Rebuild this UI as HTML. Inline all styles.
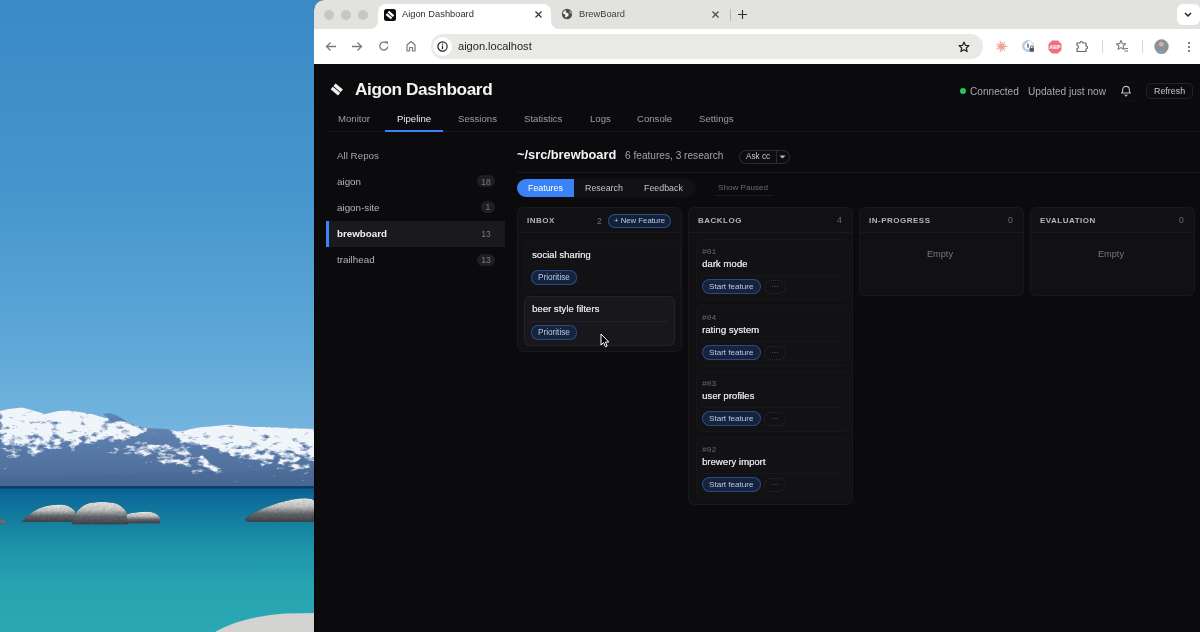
<!DOCTYPE html>
<html><head><meta charset="utf-8"><style>
html,body{margin:0;padding:0;width:1200px;height:632px;overflow:hidden;background:#0b0b0e;}
body{position:relative;font-family:"Liberation Sans",sans-serif;}
.t{position:absolute;white-space:pre;will-change:transform;}
.b{position:absolute;}
</style></head><body>

<svg class="b" style="left:0;top:0" width="330" height="632" viewBox="0 0 330 632">
<defs>
<linearGradient id="sky" x1="0" y1="0" x2="0" y2="432" gradientUnits="userSpaceOnUse">
<stop offset="0" stop-color="#3a8ac6"/><stop offset="0.45" stop-color="#4795cd"/><stop offset="0.8" stop-color="#5ea8d7"/><stop offset="1" stop-color="#74b5de"/>
</linearGradient>
<linearGradient id="water" x1="0" y1="0" x2="0" y2="1">
<stop offset="0" stop-color="#0a5c8c"/><stop offset="0.08" stop-color="#0e6c9a"/><stop offset="0.25" stop-color="#15809f"/><stop offset="0.45" stop-color="#1e96aa"/><stop offset="0.7" stop-color="#28a4b1"/><stop offset="1" stop-color="#2ba8b4"/>
</linearGradient>
<linearGradient id="mtn" x1="0" y1="0" x2="0" y2="1">
<stop offset="0" stop-color="#6d8bb8"/><stop offset="0.5" stop-color="#587aa8"/><stop offset="1" stop-color="#4a6794"/>
</linearGradient>
<linearGradient id="snowg" x1="0" y1="0" x2="0" y2="1">
<stop offset="0" stop-color="#fff" stop-opacity="1"/><stop offset="0.3" stop-color="#fff" stop-opacity="0.8"/><stop offset="0.55" stop-color="#fff" stop-opacity="0.45"/><stop offset="0.8" stop-color="#fff" stop-opacity="0.12"/><stop offset="1" stop-color="#fff" stop-opacity="0"/>
</linearGradient>
<linearGradient id="snowL" x1="0" y1="403" x2="0" y2="466" gradientUnits="userSpaceOnUse"><stop offset="0" stop-color="#fff" stop-opacity="0.95"/><stop offset="0.5" stop-color="#fff" stop-opacity="0.7"/><stop offset="1" stop-color="#fff" stop-opacity="0.15"/></linearGradient>
<linearGradient id="snowR" x1="0" y1="420" x2="0" y2="480" gradientUnits="userSpaceOnUse"><stop offset="0" stop-color="#fff" stop-opacity="0.95"/><stop offset="0.4" stop-color="#fff" stop-opacity="0.75"/><stop offset="1" stop-color="#fff" stop-opacity="0.15"/></linearGradient>
<linearGradient id="rockg" x1="0" y1="0" x2="0" y2="1">
<stop offset="0" stop-color="#dcdcda"/><stop offset="0.35" stop-color="#b9b9b8"/><stop offset="0.65" stop-color="#5e6166"/><stop offset="1" stop-color="#3a3d44"/>
</linearGradient>
<filter id="snowf" x="-0.1" y="-0.1" width="1.2" height="1.2">
<feGaussianBlur in="SourceGraphic" stdDeviation="3" result="sb"/>
<feTurbulence type="fractalNoise" baseFrequency="0.1 0.2" numOctaves="4" seed="11" result="n"/>
<feColorMatrix in="n" type="matrix" values="0 0 0 0 0  0 0 0 0 0  0 0 0 0 0  0 0 0 1 0" result="na"/>
<feComposite in="na" in2="sb" operator="arithmetic" k1="0" k2="1.2" k3="1.0" k4="-0.95" result="m"/>
<feColorMatrix in="m" type="matrix" values="0 0 0 0 0.87  0 0 0 0 0.91  0 0 0 0 0.95  0 0 0 3.5 -0.1"/>
</filter>
<filter id="rockf" x="0" y="0" width="1" height="1">
<feTurbulence type="fractalNoise" baseFrequency="0.35" numOctaves="2" seed="3" result="n"/>
<feColorMatrix in="n" type="matrix" values="0 0 0 1 0  0 0 0 1 0  0 0 0 1 0  0 0 0 0 1" result="ng"/>
<feComposite in="SourceGraphic" in2="ng" operator="arithmetic" k1="0.5" k2="0.8" k3="0" k4="0" result="c"/>
<feComposite in="c" in2="SourceGraphic" operator="in"/>
</filter>
</defs>
<rect x="0" y="0" width="330" height="632" fill="url(#sky)"/>
<path id="mt" d="M0,411 L8,409 L22,407.5 L32,410 L45,414 L58,411 L68,410.5 L80,412 L92,414 L105,418 L115,417 L122,419 L130,423.5 L145,428 L166,429 L178,431.5 L198,427.5 L215,426 L229,424.5 L240,425.5 L253,427 L270,427 L290,428 L330,429.5 L330,488 L0,488 Z" fill="url(#mtn)"/>
<g clip-path="url(#mclip)"><g filter="url(#snowf)">
<path d="M0,406 L8,404 L22,403 L32,406 L45,410 L58,407 L68,406.5 L80,408 L92,410 L103,414 L110,420 L122,421 L130,421.5 L145,426 L152,432 L125,440 L95,444 L60,450 L30,460 L0,466 Z" fill="url(#snowL)"/>
<path d="M166,427 L178,427.5 L198,423.5 L215,422 L229,420.5 L240,421.5 L253,423 L270,423 L290,424 L330,425.5 L330,480 L300,478 L262,468 L228,456 L200,446 L178,440 Z" fill="url(#snowR)"/>
<path d="M105,448 L150,440 L185,446 L215,462 L235,476 L200,474 L160,462 L120,456 Z" fill="#fff" fill-opacity="0.5"/>
</g></g>
<clipPath id="mclip"><path d="M0,411 L8,409 L22,407.5 L32,410 L45,414 L58,411 L68,410.5 L80,412 L92,414 L105,418 L115,417 L122,419 L130,423.5 L145,428 L166,429 L178,431.5 L198,427.5 L215,426 L229,424.5 L240,425.5 L253,427 L270,427 L290,428 L330,429.5 L330,488 L0,488 Z"/></clipPath>
<path d="M103,414 L110,413 L118,416 L126,421 L112,422 Z" fill="#5a7bb0" opacity="0.8"/>
<path d="M0,476 L120,474 L200,472 L330,470 L330,488 L0,488 Z" fill="#4a6693" opacity="0.45"/>
<rect x="0" y="486" width="330" height="146" fill="url(#water)"/>
<rect x="0" y="486" width="330" height="2.5" fill="#083f70"/>
<g filter="url(#rockf)"><path d="M21,522 C26,516 33,511 40,508 C47,505 54,504.5 61,504.5 C68,505 73,508 75.5,512 L75,522 Z" fill="url(#rockg)"/>
<path d="M72,524.5 C73,516 78,507 88,503.5 C96,501.5 108,501.5 116,503.5 C122,506 126,510 127.5,515 L128,524.5 Z" fill="url(#rockg)"/>
<path d="M126,523.5 L127,514.5 C132,512.5 142,511.5 151,512 C156,513 159,515.5 160,518 L160,523.5 Z" fill="url(#rockg)"/>
<path d="M0,518 C3,519 6,521 7,523 L0,524 Z" fill="#66696e"/>
<path d="M244,520 C250,514 262,508 278,503 C292,499 304,497 312,499 L316,502 L316,522 L248,522 Z" fill="url(#rockg)"/>
</g><path d="M215,632 C232,622 255,616 285,613.5 L320,613 L320,632 Z" fill="#d3d3d1"/>
</svg>
<div class="b" style="left:314px;top:0;width:886px;height:632px;background:#0b0b0e;border-top-left-radius:10px;overflow:hidden"></div><div class="b" style="left:314px;top:0px;width:886px;height:29px;background:#e2e2df;border-radius:0px;border-top-left-radius:10px;"></div><div class="b" style="left:314px;top:29px;width:886px;height:35px;background:#ffffff;border-radius:0px;"></div><div class="b" style="left:324px;top:10px;width:10px;height:10px;background:#c6c6c4;border-radius:5px;"></div><div class="b" style="left:341px;top:10px;width:10px;height:10px;background:#c6c6c4;border-radius:5px;"></div><div class="b" style="left:358px;top:10px;width:10px;height:10px;background:#c6c6c4;border-radius:5px;"></div><div class="b" style="left:378px;top:4px;width:173px;height:30px;background:#ffffff;border-radius:0px;border-radius:8px 8px 0 0;"></div><svg class="b" style="left:370px;top:21px" width="8" height="8" viewBox="0 0 8 8"><path d="M0,8 A8,8 0 0 0 8,0 L8,8 Z" fill="#fff"/></svg><svg class="b" style="left:551px;top:21px" width="8" height="8" viewBox="0 0 8 8"><path d="M8,8 A8,8 0 0 1 0,0 L0,8 Z" fill="#fff"/></svg><div class="b" style="left:384px;top:9px;width:12px;height:12px;background:#0b0b0b;border-radius:2.5px;"></div><svg class="b" style="left:384px;top:9px" width="12" height="12" viewBox="0 0 12 12"><g transform="rotate(40 6 6)" fill="#fff"><rect x="2.6" y="3.4" width="6.8" height="2.2"/><rect x="2.6" y="6.5" width="6.8" height="2.2"/></g></svg><div class="t" style="left:402px;top:9.93px;font-size:9.3px;line-height:9.3px;color:#2e2e2e;font-weight:400;">Aigon Dashboard</div><svg class="b" style="left:534px;top:10px" width="9" height="9" viewBox="0 0 9 9"><path d="M1.5,1.5 L7.5,7.5 M7.5,1.5 L1.5,7.5" stroke="#333" stroke-width="1.2"/></svg><svg class="b" style="left:561px;top:8px" width="12" height="12" viewBox="0 0 12 12"><circle cx="6" cy="6" r="5.2" fill="#4d4d4d"/><path d="M1.6,5.6 C2.2,3.6 3.6,2.6 5,2.3 C4.6,3.3 4.6,4.4 5.8,4.8 C7.2,5.3 8.2,6.2 7.4,7.4 C6.8,8.2 5.6,8.4 5.4,9.6 C4.4,9.4 3.4,8.6 4.2,7.6 C4.8,6.9 4.2,6 3.2,5.9 C2.6,5.8 2,5.8 1.6,5.6 Z" fill="#f2f2f0"/><path d="M8.2,2.6 C9.6,3.4 10.6,4.8 10.8,6.2 C10,6 9.2,5.2 8.8,4.2 Z" fill="#bdbdbb"/></svg><div class="t" style="left:579px;top:9.93px;font-size:9.3px;line-height:9.3px;color:#3d3d3d;font-weight:400;">BrewBoard</div><svg class="b" style="left:711px;top:10px" width="9" height="9" viewBox="0 0 9 9"><path d="M1.5,1.5 L7.5,7.5 M7.5,1.5 L1.5,7.5" stroke="#444" stroke-width="1.1"/></svg><div class="b" style="left:729.5px;top:9px;width:1px;height:12px;background:#b8b8b6;border-radius:0px;"></div><svg class="b" style="left:737px;top:9px" width="11" height="11" viewBox="0 0 11 11"><path d="M5.5,1 L5.5,10 M1,5.5 L10,5.5" stroke="#333" stroke-width="1.2"/></svg><div class="b" style="left:1177px;top:4px;width:23px;height:21px;background:#ffffff;border-radius:6px;"></div><svg class="b" style="left:1183px;top:11px" width="10" height="7" viewBox="0 0 10 7"><path d="M2,2 L5,5 L8,2" stroke="#222" stroke-width="1.5" fill="none"/></svg><svg class="b" style="left:325px;top:41px" width="12" height="11" viewBox="0 0 12 11"><path d="M11,5.5 L1.5,5.5 M5.5,1.5 L1.5,5.5 L5.5,9.5" stroke="#7a7a7a" stroke-width="1.3" fill="none"/></svg><svg class="b" style="left:351px;top:41px" width="12" height="11" viewBox="0 0 12 11"><path d="M1,5.5 L10.5,5.5 M6.5,1.5 L10.5,5.5 L6.5,9.5" stroke="#7a7a7a" stroke-width="1.3" fill="none"/></svg><svg class="b" style="left:378px;top:40px" width="12" height="12" viewBox="0 0 12 12"><path d="M9.8,6.5 A4,4 0 1 1 8.4,3" stroke="#7a7a7a" stroke-width="1.3" fill="none"/><path d="M6.8,1.2 L10,1.5 L9.8,4.6 Z" fill="#7a7a7a"/></svg><svg class="b" style="left:405px;top:40px" width="12" height="12" viewBox="0 0 12 12"><path d="M2,11 L2,5 L6,1.5 L10,5 L10,11 L7.5,11 L7.5,7.5 L4.5,7.5 L4.5,11 Z" stroke="#7a7a7a" stroke-width="1.2" fill="none" stroke-linejoin="round"/></svg><div class="b" style="left:431px;top:34px;width:552px;height:24.5px;background:#e9e9e6;border-radius:12.25px;"></div><div class="b" style="left:433px;top:36.5px;width:19px;height:19px;background:#ffffff;border-radius:9.5px;"></div><svg class="b" style="left:437px;top:41px" width="11" height="11" viewBox="0 0 11 11"><circle cx="5.5" cy="5.5" r="4.6" stroke="#222" stroke-width="1.2" fill="none"/><rect x="4.9" y="4.6" width="1.2" height="3.6" fill="#222"/><rect x="4.9" y="2.6" width="1.2" height="1.2" fill="#222"/></svg><div class="t" style="left:458px;top:40.85px;font-size:11.05px;line-height:11.05px;color:#1f1f1f;font-weight:400;">aigon.localhost</div><svg class="b" style="left:958px;top:41px" width="12" height="12" viewBox="0 0 12 12"><path d="M6,1 L7.4,4.3 L11,4.6 L8.3,7 L9.1,10.6 L6,8.7 L2.9,10.6 L3.7,7 L1,4.6 L4.6,4.3 Z" stroke="#222" stroke-width="1.2" fill="none" stroke-linejoin="round"/></svg><svg class="b" style="left:994px;top:39px" width="15" height="15" viewBox="0 0 15 15"><g stroke="#eea39a" stroke-width="1"><line x1="7.5" y1="7.5" x2="13.30" y2="7.50"/><line x1="7.5" y1="7.5" x2="11.64" y2="9.50"/><line x1="7.5" y1="7.5" x2="11.12" y2="12.03"/><line x1="7.5" y1="7.5" x2="8.52" y2="11.98"/><line x1="7.5" y1="7.5" x2="6.21" y2="13.15"/><line x1="7.5" y1="7.5" x2="4.63" y2="11.10"/><line x1="7.5" y1="7.5" x2="2.27" y2="10.02"/><line x1="7.5" y1="7.5" x2="2.90" y2="7.50"/><line x1="7.5" y1="7.5" x2="2.27" y2="4.98"/><line x1="7.5" y1="7.5" x2="4.63" y2="3.90"/><line x1="7.5" y1="7.5" x2="6.21" y2="1.85"/><line x1="7.5" y1="7.5" x2="8.52" y2="3.02"/><line x1="7.5" y1="7.5" x2="11.12" y2="2.97"/><line x1="7.5" y1="7.5" x2="11.64" y2="5.50"/></g><circle cx="7.5" cy="7.5" r="2.4" fill="#eea39a"/></svg><svg class="b" style="left:1020px;top:38px" width="16" height="16" viewBox="0 0 16 16"><circle cx="8" cy="8" r="5.6" stroke="#d0d0d0" stroke-width="1" fill="#fff"/><path d="M8,3.6 A4.4,4.4 0 1 0 11.5,10.6" stroke="#a9cbf3" stroke-width="1.8" fill="none"/><rect x="7.3" y="5.6" width="1.4" height="4.2" fill="#666"/><rect x="9.6" y="10" width="4.4" height="3.8" rx="0.6" fill="#555"/><path d="M10.6,10 L10.6,9 A1.2,1.2 0 0 1 13,9 L13,10" stroke="#555" stroke-width="0.9" fill="none"/></svg><svg class="b" style="left:1048px;top:40px" width="14" height="14" viewBox="0 0 14 14"><path d="M4.1,0.5 L9.9,0.5 L13.5,4.1 L13.5,9.9 L9.9,13.5 L4.1,13.5 L0.5,9.9 L0.5,4.1 Z" fill="#f06f7c"/><text x="7" y="9.2" font-size="5.2" font-weight="700" fill="#fff" text-anchor="middle" font-family="Liberation Sans">ABP</text></svg><svg class="b" style="left:1075px;top:39px" width="14" height="14" viewBox="0 0 14 14"><path d="M2,4 L5,4 C5,2 8,2 8,4 L11,4 L11,7 C13,7 13,10 11,10 L11,12.5 L2,12.5 L2,9.5 C4,9.5 4,6.5 2,6.5 Z" stroke="#666" stroke-width="1.2" fill="none" stroke-linejoin="round"/></svg><div class="b" style="left:1102px;top:40px;width:1px;height:13px;background:#dadada;border-radius:0px;"></div><svg class="b" style="left:1115px;top:39px" width="14" height="14" viewBox="0 0 14 14"><path d="M6,1.5 L7.3,4.6 L10.6,4.9 L8.1,7.1 L8.9,10.4 L6,8.6 L3.1,10.4 L3.9,7.1 L1.4,4.9 L4.7,4.6 Z" stroke="#777" stroke-width="1.1" fill="none" stroke-linejoin="round"/><path d="M9.5,9.5 L13,9.5 M9.5,12 L13,12" stroke="#777" stroke-width="1.1"/></svg><div class="b" style="left:1141.5px;top:40px;width:1px;height:13px;background:#dadada;border-radius:0px;"></div><svg class="b" style="left:1154px;top:39px" width="15" height="15" viewBox="0 0 15 15"><circle cx="7.5" cy="7.5" r="7.2" fill="#8d9195"/><circle cx="7.3" cy="5.2" r="2.4" fill="#d2aea4"/><path d="M2.5,13 C3.5,9.5 11.5,9.5 12.5,13 L10,14.8 L5,14.8 Z" fill="#7e9cb6"/></svg><div class="b" style="left:1187.5px;top:41.5px;width:2.2px;height:2.2px;background:#555;border-radius:1.1px;"></div><div class="b" style="left:1187.5px;top:45.5px;width:2.2px;height:2.2px;background:#555;border-radius:1.1px;"></div><div class="b" style="left:1187.5px;top:49.5px;width:2.2px;height:2.2px;background:#555;border-radius:1.1px;"></div><div class="b" style="left:314px;top:64px;width:1px;height:568px;background:#050507;border-radius:0px;"></div><svg class="b" style="left:328px;top:80px" width="18" height="18" viewBox="0 0 18 18"><g transform="rotate(40 9 9)" fill="#f2f2f2"><rect x="4.3" y="5.6" width="9.6" height="3.4" rx="0.4"/><rect x="4.3" y="9.9" width="9.6" height="3.4" rx="0.4"/></g></svg><div class="t" style="left:355px;top:80.74px;font-size:17.2px;line-height:17.2px;color:#f4f4f5;font-weight:700;letter-spacing:-0.4px;">Aigon Dashboard</div><div class="t" style="left:337.8px;top:113.87px;font-size:9.6px;line-height:9.6px;color:#9d9da3;font-weight:400;">Monitor</div><div class="t" style="left:396.8px;top:113.87px;font-size:9.6px;line-height:9.6px;color:#ececee;font-weight:400;">Pipeline</div><div class="t" style="left:458px;top:113.87px;font-size:9.6px;line-height:9.6px;color:#9d9da3;font-weight:400;">Sessions</div><div class="t" style="left:523.5px;top:113.87px;font-size:9.6px;line-height:9.6px;color:#9d9da3;font-weight:400;">Statistics</div><div class="t" style="left:589.5px;top:113.87px;font-size:9.6px;line-height:9.6px;color:#9d9da3;font-weight:400;">Logs</div><div class="t" style="left:637px;top:113.87px;font-size:9.6px;line-height:9.6px;color:#9d9da3;font-weight:400;">Console</div><div class="t" style="left:699px;top:113.87px;font-size:9.6px;line-height:9.6px;color:#9d9da3;font-weight:400;">Settings</div><div class="b" style="left:328px;top:131px;width:872px;height:1px;background:#17171b;border-radius:0px;"></div><div class="b" style="left:385px;top:130px;width:58px;height:2px;background:#3b82f6;border-radius:0px;"></div><div class="b" style="left:960px;top:88px;width:6px;height:6px;background:#22c55e;border-radius:3px;"></div><div class="t" style="left:970.4px;top:86.65px;font-size:10.1px;line-height:10.1px;color:#a8a8ad;font-weight:400;">Connected</div><div class="t" style="left:1027.5px;top:86.65px;font-size:10.1px;line-height:10.1px;color:#a8a8ad;font-weight:400;">Updated just now</div><div class="b" style="left:1116px;top:81.5px;width:20px;height:19px;background:none;border-radius:3px;border-top:1px dotted #1c1c20;border-bottom:1px dotted #1c1c20;box-sizing:border-box;"></div><svg class="b" style="left:1120px;top:85px" width="12" height="12" viewBox="0 0 12 12"><path d="M1.5,8 L2.6,6.8 L2.6,4.8 C2.6,2.7 4.1,1.4 6,1.4 C7.9,1.4 9.4,2.7 9.4,4.8 L9.4,6.8 L10.5,8 Z" stroke="#bdbdc1" stroke-width="1.1" fill="none" stroke-linejoin="round"/><path d="M4.6,9.6 L6,10.9 L7.4,9.6" stroke="#bdbdc1" stroke-width="1.1" fill="none"/></svg><div class="b" style="left:1145.5px;top:83.3px;width:47px;height:15.4px;background:#0d0d10;border-radius:5px;box-shadow:inset 0 0 0 1px #222227;"></div><div class="t" style="left:1153.8px;top:86.67px;font-size:8.9px;line-height:8.9px;color:#c9c9cd;font-weight:400;">Refresh</div><div class="t" style="left:337.3px;top:151.20px;font-size:9.8px;line-height:9.8px;color:#a3a3a8;font-weight:400;">All Repos</div><div class="b" style="left:326px;top:221px;width:179px;height:26px;background:#1a1a1e;border-radius:0px;"></div><div class="b" style="left:326px;top:221px;width:2.5px;height:26px;background:#3b82f6;border-radius:0px;"></div><div class="t" style="left:337.3px;top:177.10px;font-size:9.8px;line-height:9.8px;color:#b4b4b9;font-weight:400;">aigon</div><div class="b" style="left:477px;top:175.4px;width:18px;height:12px;background:#1f1f23;border-radius:6px;"></div><div class="t" style="left:286px;width:400px;text-align:center;top:177.52px;font-size:8.6px;line-height:8.6px;color:#77777d;font-weight:400;">18</div><div class="t" style="left:337.3px;top:203.00px;font-size:9.8px;line-height:9.8px;color:#b4b4b9;font-weight:400;">aigon-site</div><div class="b" style="left:481px;top:201.3px;width:14px;height:12px;background:#1f1f23;border-radius:6px;"></div><div class="t" style="left:288px;width:400px;text-align:center;top:203.42px;font-size:8.6px;line-height:8.6px;color:#77777d;font-weight:400;">1</div><div class="t" style="left:337.3px;top:229.20px;font-size:9.8px;line-height:9.8px;color:#f0f0f2;font-weight:700;">brewboard</div><div class="t" style="left:286px;width:400px;text-align:center;top:229.62px;font-size:8.6px;line-height:8.6px;color:#77777d;font-weight:400;">13</div><div class="t" style="left:337.3px;top:255.30px;font-size:9.8px;line-height:9.8px;color:#b4b4b9;font-weight:400;">trailhead</div><div class="b" style="left:477px;top:253.60000000000002px;width:18px;height:12px;background:#1f1f23;border-radius:6px;"></div><div class="t" style="left:286px;width:400px;text-align:center;top:255.72px;font-size:8.6px;line-height:8.6px;color:#77777d;font-weight:400;">13</div><div class="t" style="left:517px;top:149.16px;font-size:12.8px;line-height:12.8px;color:#f4f4f5;font-weight:700;">~/src/brewboard</div><div class="t" style="left:625.3px;top:151.11px;font-size:10.15px;line-height:10.15px;color:#a3a3a8;font-weight:400;">6 features, 3 research</div><div class="b" style="left:739px;top:150px;width:51px;height:14px;background:#0d0d10;border-radius:7px;box-shadow:inset 0 0 0 1px #2a2a2f;"></div><div class="b" style="left:776px;top:150px;width:1px;height:14px;background:#2a2a2f;border-radius:0px;"></div><div class="t" style="left:745.8px;top:153.06px;font-size:8.2px;line-height:8.2px;color:#c9c9cd;font-weight:400;">Ask cc</div><svg class="b" style="left:779px;top:155px" width="7" height="4" viewBox="0 0 7 4"><path d="M0.5,0.5 L6.5,0.5 L3.5,3.5 Z" fill="#bbb"/></svg><div class="b" style="left:517px;top:172px;width:683px;height:1px;background:#1a1a1e;border-radius:0px;"></div><div class="b" style="left:517px;top:179px;width:179px;height:18px;background:#121215;border-radius:9px;"></div><div class="b" style="left:517px;top:179px;width:57px;height:18px;background:#3b82f6;border-radius:0px;border-radius:9px 0 0 9px;"></div><div class="t" style="left:527.5px;top:184.31px;font-size:8.85px;line-height:8.85px;color:#ffffff;font-weight:400;">Features</div><div class="t" style="left:584.5px;top:184.31px;font-size:8.85px;line-height:8.85px;color:#c4c4c8;font-weight:400;">Research</div><div class="t" style="left:644.2px;top:184.31px;font-size:8.85px;line-height:8.85px;color:#c4c4c8;font-weight:400;">Feedback</div><div class="t" style="left:717.5px;top:184.44px;font-size:8.1px;line-height:8.1px;color:#6a6a70;font-weight:400;">Show Paused</div><div class="b" style="left:715px;top:195px;width:58px;height:1px;background:#1a1a1e;border-radius:0px;"></div><div class="b" style="left:516.5px;top:207px;width:165px;height:145px;background:#111114;border-radius:6px;box-shadow:inset 0 0 0 1px #19191d;"></div><div class="b" style="left:517.5px;top:232px;width:163px;height:1px;background:#1a1a1e;border-radius:0px;"></div><div class="t" style="left:526.5px;top:217.23px;font-size:8px;line-height:8px;color:#b4b4b9;font-weight:700;letter-spacing:0.5px;">INBOX</div><div class="t" style="right:598.3px;top:216.72px;font-size:8.6px;line-height:8.6px;color:#6d6d73;font-weight:400;text-align:right;">2</div><div class="b" style="left:687.5px;top:207px;width:165px;height:298px;background:#111114;border-radius:6px;box-shadow:inset 0 0 0 1px #19191d;"></div><div class="b" style="left:688.5px;top:232px;width:163px;height:1px;background:#1a1a1e;border-radius:0px;"></div><div class="t" style="left:697.5px;top:217.23px;font-size:8px;line-height:8px;color:#b4b4b9;font-weight:700;letter-spacing:0.5px;">BACKLOG</div><div class="t" style="right:358.5px;top:216.02px;font-size:8.6px;line-height:8.6px;color:#6d6d73;font-weight:400;text-align:right;">4</div><div class="b" style="left:858.5px;top:207px;width:165px;height:89px;background:#111114;border-radius:6px;box-shadow:inset 0 0 0 1px #19191d;"></div><div class="b" style="left:859.5px;top:232px;width:163px;height:1px;background:#1a1a1e;border-radius:0px;"></div><div class="t" style="left:868.5px;top:217.23px;font-size:8px;line-height:8px;color:#b4b4b9;font-weight:700;letter-spacing:0.5px;">IN-PROGRESS</div><div class="t" style="right:187.5px;top:216.02px;font-size:8.6px;line-height:8.6px;color:#6d6d73;font-weight:400;text-align:right;">0</div><div class="b" style="left:1029.5px;top:207px;width:165px;height:89px;background:#111114;border-radius:6px;box-shadow:inset 0 0 0 1px #19191d;"></div><div class="b" style="left:1030.5px;top:232px;width:163px;height:1px;background:#1a1a1e;border-radius:0px;"></div><div class="t" style="left:1039.5px;top:217.23px;font-size:8px;line-height:8px;color:#b4b4b9;font-weight:700;letter-spacing:0.5px;">EVALUATION</div><div class="t" style="right:16.5px;top:216.02px;font-size:8.6px;line-height:8.6px;color:#6d6d73;font-weight:400;text-align:right;">0</div><div class="b" style="left:607.5px;top:214px;width:63px;height:14px;background:#132038;border-radius:7px;box-shadow:inset 0 0 0 1px #2c4f8c;"></div><div class="t" style="left:614px;top:217.44px;font-size:7.75px;line-height:7.75px;color:#b7c9ea;font-weight:400;">+ New Feature</div><div class="b" style="left:523.5px;top:241px;width:157px;height:51px;background:#121215;border-radius:6px;box-shadow:inset 0 0 0 1px #17171b;"></div><div class="t" style="left:531.6px;top:249.67px;font-size:9.6px;line-height:9.6px;color:#dcdce0;font-weight:400;text-shadow:0.25px 0 0 #dcdce0;">social sharing</div><div class="b" style="left:531px;top:270px;width:46px;height:14.5px;background:#15233d;border-radius:7.25px;box-shadow:inset 0 0 0 1px #284b85;"></div><div class="t" style="left:537.8px;top:273.56px;font-size:8.2px;line-height:8.2px;color:#b7c9ea;font-weight:400;">Prioritise</div><div class="b" style="left:523.5px;top:296px;width:151px;height:49.5px;background:#18181c;border-radius:6px;box-shadow:inset 0 0 0 1px #242428;"></div><div class="b" style="left:530px;top:320.5px;width:138px;height:1px;background:#222226;border-radius:0px;"></div><div class="t" style="left:531.6px;top:304.17px;font-size:9.6px;line-height:9.6px;color:#dcdce0;font-weight:400;text-shadow:0.25px 0 0 #dcdce0;">beer style filters</div><div class="b" style="left:531px;top:325px;width:46px;height:14.5px;background:#15233d;border-radius:7.25px;box-shadow:inset 0 0 0 1px #284b85;"></div><div class="t" style="left:537.8px;top:328.56px;font-size:8.2px;line-height:8.2px;color:#b7c9ea;font-weight:400;">Prioritise</div><svg class="b" style="left:600px;top:333px" width="10" height="15" viewBox="0 0 10 15"><path d="M1,1 L1,12 L3.6,9.6 L5.5,13.8 L7.2,13 L5.4,9 L8.8,9 Z" fill="#000" stroke="#fff" stroke-width="1"/></svg><div class="b" style="left:695.5px;top:239px;width:154.5px;height:61px;background:#121215;border-radius:6px;box-shadow:inset 0 0 0 1px #17171b;"></div><div class="b" style="left:700px;top:275px;width:141px;height:1px;background:#18181c;border-radius:0px;"></div><div class="t" style="left:702.3px;top:247.73px;font-size:8px;line-height:8px;color:#68686e;font-weight:400;font-family:'Liberation Mono',monospace;">#01</div><div class="t" style="left:702.3px;top:259.07px;font-size:9.6px;line-height:9.6px;color:#dcdce0;font-weight:400;text-shadow:0.25px 0 0 #dcdce0;">dark mode</div><div class="b" style="left:702px;top:279.2px;width:59px;height:15px;background:#15233d;border-radius:7.5px;box-shadow:inset 0 0 0 1px #284b85;"></div><div class="t" style="left:709px;top:283.14px;font-size:8.1px;line-height:8.1px;color:#b7c9ea;font-weight:400;">Start feature</div><div class="b" style="left:764px;top:280px;width:22px;height:13.5px;background:none;border-radius:7px;border:1px dotted #2c2c31;box-sizing:border-box;"></div><div class="t" style="left:575px;width:400px;text-align:center;top:282.57px;font-size:7px;line-height:7px;color:#6a6a70;font-weight:400;">···</div><div class="b" style="left:695.5px;top:305px;width:154.5px;height:61px;background:#121215;border-radius:6px;box-shadow:inset 0 0 0 1px #17171b;"></div><div class="b" style="left:700px;top:341px;width:141px;height:1px;background:#18181c;border-radius:0px;"></div><div class="t" style="left:702.3px;top:313.73px;font-size:8px;line-height:8px;color:#68686e;font-weight:400;font-family:'Liberation Mono',monospace;">#04</div><div class="t" style="left:702.3px;top:325.07px;font-size:9.6px;line-height:9.6px;color:#dcdce0;font-weight:400;text-shadow:0.25px 0 0 #dcdce0;">rating system</div><div class="b" style="left:702px;top:345.2px;width:59px;height:15px;background:#15233d;border-radius:7.5px;box-shadow:inset 0 0 0 1px #284b85;"></div><div class="t" style="left:709px;top:349.14px;font-size:8.1px;line-height:8.1px;color:#b7c9ea;font-weight:400;">Start feature</div><div class="b" style="left:764px;top:346px;width:22px;height:13.5px;background:none;border-radius:7px;border:1px dotted #2c2c31;box-sizing:border-box;"></div><div class="t" style="left:575px;width:400px;text-align:center;top:348.57px;font-size:7px;line-height:7px;color:#6a6a70;font-weight:400;">···</div><div class="b" style="left:695.5px;top:371px;width:154.5px;height:61px;background:#121215;border-radius:6px;box-shadow:inset 0 0 0 1px #17171b;"></div><div class="b" style="left:700px;top:407px;width:141px;height:1px;background:#18181c;border-radius:0px;"></div><div class="t" style="left:702.3px;top:379.73px;font-size:8px;line-height:8px;color:#68686e;font-weight:400;font-family:'Liberation Mono',monospace;">#03</div><div class="t" style="left:702.3px;top:391.07px;font-size:9.6px;line-height:9.6px;color:#dcdce0;font-weight:400;text-shadow:0.25px 0 0 #dcdce0;">user profiles</div><div class="b" style="left:702px;top:411.2px;width:59px;height:15px;background:#15233d;border-radius:7.5px;box-shadow:inset 0 0 0 1px #284b85;"></div><div class="t" style="left:709px;top:415.14px;font-size:8.1px;line-height:8.1px;color:#b7c9ea;font-weight:400;">Start feature</div><div class="b" style="left:764px;top:412px;width:22px;height:13.5px;background:none;border-radius:7px;border:1px dotted #2c2c31;box-sizing:border-box;"></div><div class="t" style="left:575px;width:400px;text-align:center;top:414.57px;font-size:7px;line-height:7px;color:#6a6a70;font-weight:400;">···</div><div class="b" style="left:695.5px;top:437px;width:154.5px;height:61px;background:#121215;border-radius:6px;box-shadow:inset 0 0 0 1px #17171b;"></div><div class="b" style="left:700px;top:473px;width:141px;height:1px;background:#18181c;border-radius:0px;"></div><div class="t" style="left:702.3px;top:445.73px;font-size:8px;line-height:8px;color:#68686e;font-weight:400;font-family:'Liberation Mono',monospace;">#02</div><div class="t" style="left:702.3px;top:457.07px;font-size:9.6px;line-height:9.6px;color:#dcdce0;font-weight:400;text-shadow:0.25px 0 0 #dcdce0;">brewery import</div><div class="b" style="left:702px;top:477.2px;width:59px;height:15px;background:#15233d;border-radius:7.5px;box-shadow:inset 0 0 0 1px #284b85;"></div><div class="t" style="left:709px;top:481.14px;font-size:8.1px;line-height:8.1px;color:#b7c9ea;font-weight:400;">Start feature</div><div class="b" style="left:764px;top:478px;width:22px;height:13.5px;background:none;border-radius:7px;border:1px dotted #2c2c31;box-sizing:border-box;"></div><div class="t" style="left:575px;width:400px;text-align:center;top:480.57px;font-size:7px;line-height:7px;color:#6a6a70;font-weight:400;">···</div><div class="t" style="left:740.0px;width:400px;text-align:center;top:250.01px;font-size:9.2px;line-height:9.2px;color:#77777d;font-weight:400;">Empty</div><div class="t" style="left:911.0px;width:400px;text-align:center;top:250.01px;font-size:9.2px;line-height:9.2px;color:#77777d;font-weight:400;">Empty</div>
</body></html>
